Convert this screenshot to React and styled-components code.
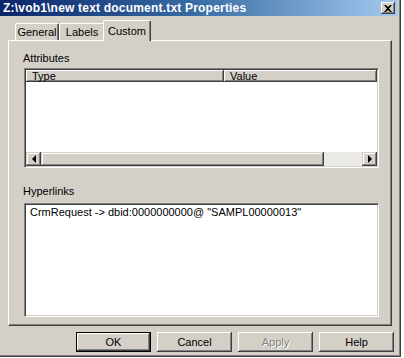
import React from 'react';
import styled, { createGlobalStyle } from 'styled-components';

const Global = createGlobalStyle`
  html, body { margin: 0; padding: 0; background: #ffffff; }
  body { font-family: "Liberation Sans", Arial, sans-serif; font-size: 11px; color: #000; }
  * { box-sizing: border-box; }
`;

const Window = styled.div`
  width: 401px;
  height: 357px;
  background: #d4d0c8;
  display: flex;
  flex-direction: column;
  box-shadow: inset -1px -1px #404040, inset -2px -2px #808080;
`;

const TitleBar = styled.div`
  height: 16px;
  margin-right: 3px;
  padding: 0 3px 0 3px;
  display: flex;
  align-items: center;
  justify-content: space-between;
  background: linear-gradient(to right, #0a246a 0%, #3a6ea5 50%, #a6caf0 100%);
`;

const Title = styled.span`
  color: #ffffff;
  font-weight: bold;
  font-size: 12px;
  letter-spacing: 0.2px;
  line-height: 16px;
  white-space: nowrap;
`;

const CloseButton = styled.div`
  width: 14px;
  height: 12px;
  background: #d4d0c8;
  box-shadow: inset -1px -1px #404040, inset 1px 1px #ffffff, inset -2px -2px #808080;
  display: flex;
  align-items: center;
  justify-content: center;
`;

const TabStrip = styled.div`
  margin-top: 4px;
  height: 20px;
  padding-left: 15px;
  display: flex;
  align-items: flex-end;
`;

const Tab = styled.div`
  position: relative;
  z-index: ${(p) => (p.$active ? 2 : 1)};
  width: ${(p) => p.$w}px;
  height: ${(p) => (p.$active ? 21 : 17)}px;
  margin: ${(p) => (p.$active ? '0 -2px -1px -2px' : '0')};
  background: #d4d0c8;
  border-top: 1px solid #ffffff;
  border-left: 1px solid #ffffff;
  border-right: 1px solid #404040;
  border-radius: 2px 2px 0 0;
  box-shadow: inset -1px 0 #808080;
  display: flex;
  align-items: ${(p) => (p.$active ? 'flex-start' : 'center')};
  padding-top: ${(p) => (p.$active ? 4 : 0)}px;
  justify-content: center;
  font-size: 11px;
  line-height: 13px;
`;

const Panel = styled.div`
  margin-left: 8px;
  width: 384px;
  height: 286px;
  border-top: 1px solid #ffffff;
  border-left: 1px solid #ffffff;
  border-right: 1px solid #404040;
  border-bottom: 1px solid #404040;
  box-shadow: inset -1px -1px #808080;
  padding: 11px 0 0 15px;
  display: flex;
  flex-direction: column;
`;

const GroupLabel = styled.div`
  margin-left: -1px;
  margin-top: ${(p) => p.$mt || 0}px;
  height: 13px;
  line-height: 13px;
  font-size: 11px;
`;

const Sunken = styled.div`
  margin-top: ${(p) => p.$mt}px;
  width: 355px;
  height: ${(p) => p.$h}px;
  background: #ffffff;
  border: 1px solid;
  border-color: #808080 #ffffff #ffffff #808080;
  padding: 1px;
  box-shadow: inset 1px 1px #404040, inset -1px -1px #d4d0c8;
  display: flex;
  flex-direction: column;
`;

const Header = styled.div`
  height: 12px;
  display: flex;
`;

const HeaderCell = styled.div`
  width: ${(p) => (p.$w ? `${p.$w}px` : 'auto')};
  flex: ${(p) => (p.$w ? 'none' : 1)};
  background: #d4d0c8;
  box-shadow: inset -1px -1px #404040, inset 1px 1px #ffffff, inset -2px -2px #808080;
  padding-left: 6px;
  font-size: 11px;
  line-height: 12px;
`;

const ListArea = styled.div`
  flex: 1;
`;

const ScrollBar = styled.div`
  height: 14px;
  display: flex;
`;

const Raised = styled.div`
  width: ${(p) => p.$w}px;
  background: #d4d0c8;
  box-shadow: inset -1px -1px #404040, inset 1px 1px #d4d0c8, inset -2px -2px #808080, inset 2px 2px #ffffff;
  display: flex;
  align-items: center;
  justify-content: center;
`;

const Track = styled.div`
  flex: 1;
  background-color: #ebe9e5;
`;

const Arrow = styled.span`
  width: 0;
  height: 0;
  border-top: 4px solid transparent;
  border-bottom: 4px solid transparent;
  ${(p) => (p.$dir === 'left' ? 'border-right: 4px solid #000;' : 'border-left: 4px solid #000;')}
`;

const LinkText = styled.div`
  padding: 1px 0 0 4px;
  font-size: 11px;
  line-height: 13px;
  white-space: nowrap;
`;

const ButtonRow = styled.div`
  margin-top: 6px;
  height: 20px;
  padding-right: 7px;
  display: flex;
  justify-content: flex-end;
  gap: 6px;
`;

const Button = styled.div`
  width: 75px;
  height: 20px;
  background: #d4d0c8;
  border: ${(p) => (p.$default ? '1px solid #000' : 'none')};
  box-shadow: ${(p) =>
    p.$default
      ? 'inset -1px -1px #404040, inset 1px 1px #ffffff, inset -2px -2px #808080'
      : 'inset -1px -1px #404040, inset 1px 1px #ffffff, inset -2px -2px #808080, inset 2px 2px #d4d0c8'};
  display: flex;
  align-items: center;
  justify-content: center;
  font-size: 11px;
  color: ${(p) => (p.$disabled ? '#808080' : '#000')};
  text-shadow: ${(p) => (p.$disabled ? '1px 1px #ffffff' : 'none')};
`;

export default function App() {
  return (
    <>
      <Global />
      <Window>
        <TitleBar>
          <Title>Z:\vob1\new text document.txt Properties</Title>
          <CloseButton>
            <svg width="8" height="7" viewBox="0 0 8 7">
              <path d="M0 0h2l2 2 2-2h2L5 3.5 8 7H6L4 5 2 7H0l3-3.5z" fill="#000" />
            </svg>
          </CloseButton>
        </TitleBar>
        <TabStrip>
          <Tab $w={44}>General</Tab>
          <Tab $w={46}>Labels</Tab>
          <Tab $w={48} $active>Custom</Tab>
        </TabStrip>
        <Panel>
          <GroupLabel>Attributes</GroupLabel>
          <Sunken $mt={3} $h={100}>
            <Header>
              <HeaderCell $w={198}>Type</HeaderCell>
              <HeaderCell>Value</HeaderCell>
            </Header>
            <ListArea />
            <ScrollBar>
              <Raised $w={15}><Arrow $dir="left" /></Raised>
              <Raised $w={283} />
              <Track />
              <Raised $w={15}><Arrow $dir="right" /></Raised>
            </ScrollBar>
          </Sunken>
          <GroupLabel $mt={17}>Hyperlinks</GroupLabel>
          <Sunken $mt={5} $h={114}>
            <LinkText>CrmRequest -&gt; dbid:0000000000@ "SAMPL00000013"</LinkText>
          </Sunken>
        </Panel>
        <ButtonRow>
          <Button $default>OK</Button>
          <Button>Cancel</Button>
          <Button $disabled>Apply</Button>
          <Button>Help</Button>
        </ButtonRow>
      </Window>
    </>
  );
}
